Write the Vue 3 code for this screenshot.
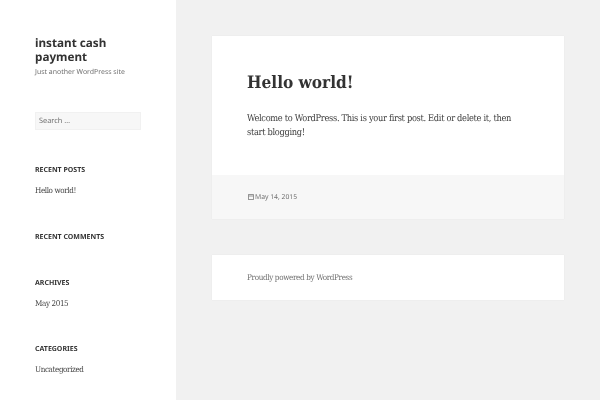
<script setup>
const widgets = [
  { title: 'Recent Posts', link: 'Hello world!' },
  { title: 'Recent Comments' },
  { title: 'Archives', link: 'May 2015' },
  { title: 'Categories', link: 'Uncategorized' },
]
</script>

<template>
  <div class="page">
    <aside class="sidebar">
      <h1 class="site-title">instant cash payment</h1>
      <p class="tagline">Just another WordPress site</p>
      <div class="search">Search …</div>
      <section v-for="w in widgets" :key="w.title" class="widget" :class="{ empty: !w.link }">
        <h2 class="widget-title">{{ w.title }}</h2>
        <a v-if="w.link" class="widget-link">{{ w.link }}</a>
      </section>
    </aside>
    <main class="main">
      <article class="card">
        <div class="post-body">
          <h2 class="post-title">Hello world!</h2>
          <p class="post-text">Welcome to WordPress. This is your first post. Edit or delete it, then start blogging!</p>
        </div>
        <footer class="post-meta">
          <svg class="cal" width="6" height="6" viewBox="0 0 6 6" fill="none" stroke="#8a8a8a" stroke-width="0.9">
            <rect x="0.5" y="0.6" width="5" height="4.9" />
            <path d="M0.5 2h5" />
            <path d="M2 0v1M4 0v1" stroke-width="0.6" />
          </svg>
          <span>May 14, 2015</span>
        </footer>
      </article>
      <footer class="card site-footer">Proudly powered by WordPress</footer>
    </main>
  </div>
</template>

<style>
html, body { margin: 0; background: #f1f1f1; }
</style>

<style scoped>
.page { display: flex; width: 600px; height: 400px; overflow: hidden; background: #f1f1f1; text-rendering: geometricPrecision; filter: blur(0.25px); }
.sidebar {
  width: 176px; flex: none; box-sizing: border-box; height: 400px; background: #fff;
  padding: 36px 35px 0; overflow: hidden;
}
.site-title {
  margin: 0; font: 700 11.7px/14px "Noto Sans", sans-serif; color: #333; width: 90px;
}
.tagline { margin: 2px 0 0; font: 400 6.95px/14px "Noto Sans", sans-serif; color: #707070; white-space: nowrap; }
.search {
  margin-top: 32px; width: 106px; height: 18px; box-sizing: border-box; padding-left: 3px;
  background: #f7f7f7; border: 1px solid #f1f1f1;
  font: 400 7.4px/16px "Noto Sans", sans-serif; color: #707070;
}
.widget { height: 66px; }
.widget:first-of-type { margin-top: 34px; height: 67px; }
.widget.empty { height: 46px; }
.widget-title {
  margin: 0; font: 700 7px/14px "Noto Sans", sans-serif; text-transform: uppercase; color: #333;
}
.widget-link {
  display: block; margin-top: 6px; font: 400 8px/14px "DejaVu Serif Condensed", "DejaVu Serif", serif; letter-spacing: -0.38px; color: #444;
}
.main { flex: 1; padding: 36px 36px 0; }
.card { background: #fff; box-shadow: 0 0 1px rgba(0,0,0,.08); }
.post-body { padding: 36px 35px 0; height: 139px; box-sizing: border-box; }
.post-title { margin: 0; font: 700 17.1px/23px "DejaVu Serif Condensed", "DejaVu Serif", serif; color: #333; }
.post-text { margin: 17px 0 0; font: 400 9.2px/14px "DejaVu Serif Condensed", "DejaVu Serif", serif; letter-spacing: -0.31px; color: #3d3d3d; width: 270px; }
.post-meta {
  height: 44px; background: #f7f7f7; padding: 0 35px 0 36px; box-sizing: border-box; display: flex; align-items: center; gap: 1px;
  font: 400 6.8px/14px "Noto Sans", sans-serif; color: #707070;
}
.site-footer {
  margin-top: 36px; height: 45px; box-sizing: border-box; padding: 0 35px;
  font: 400 8px/45px "DejaVu Serif Condensed", "DejaVu Serif", serif; letter-spacing: -0.33px; color: #707070;
}
</style>
